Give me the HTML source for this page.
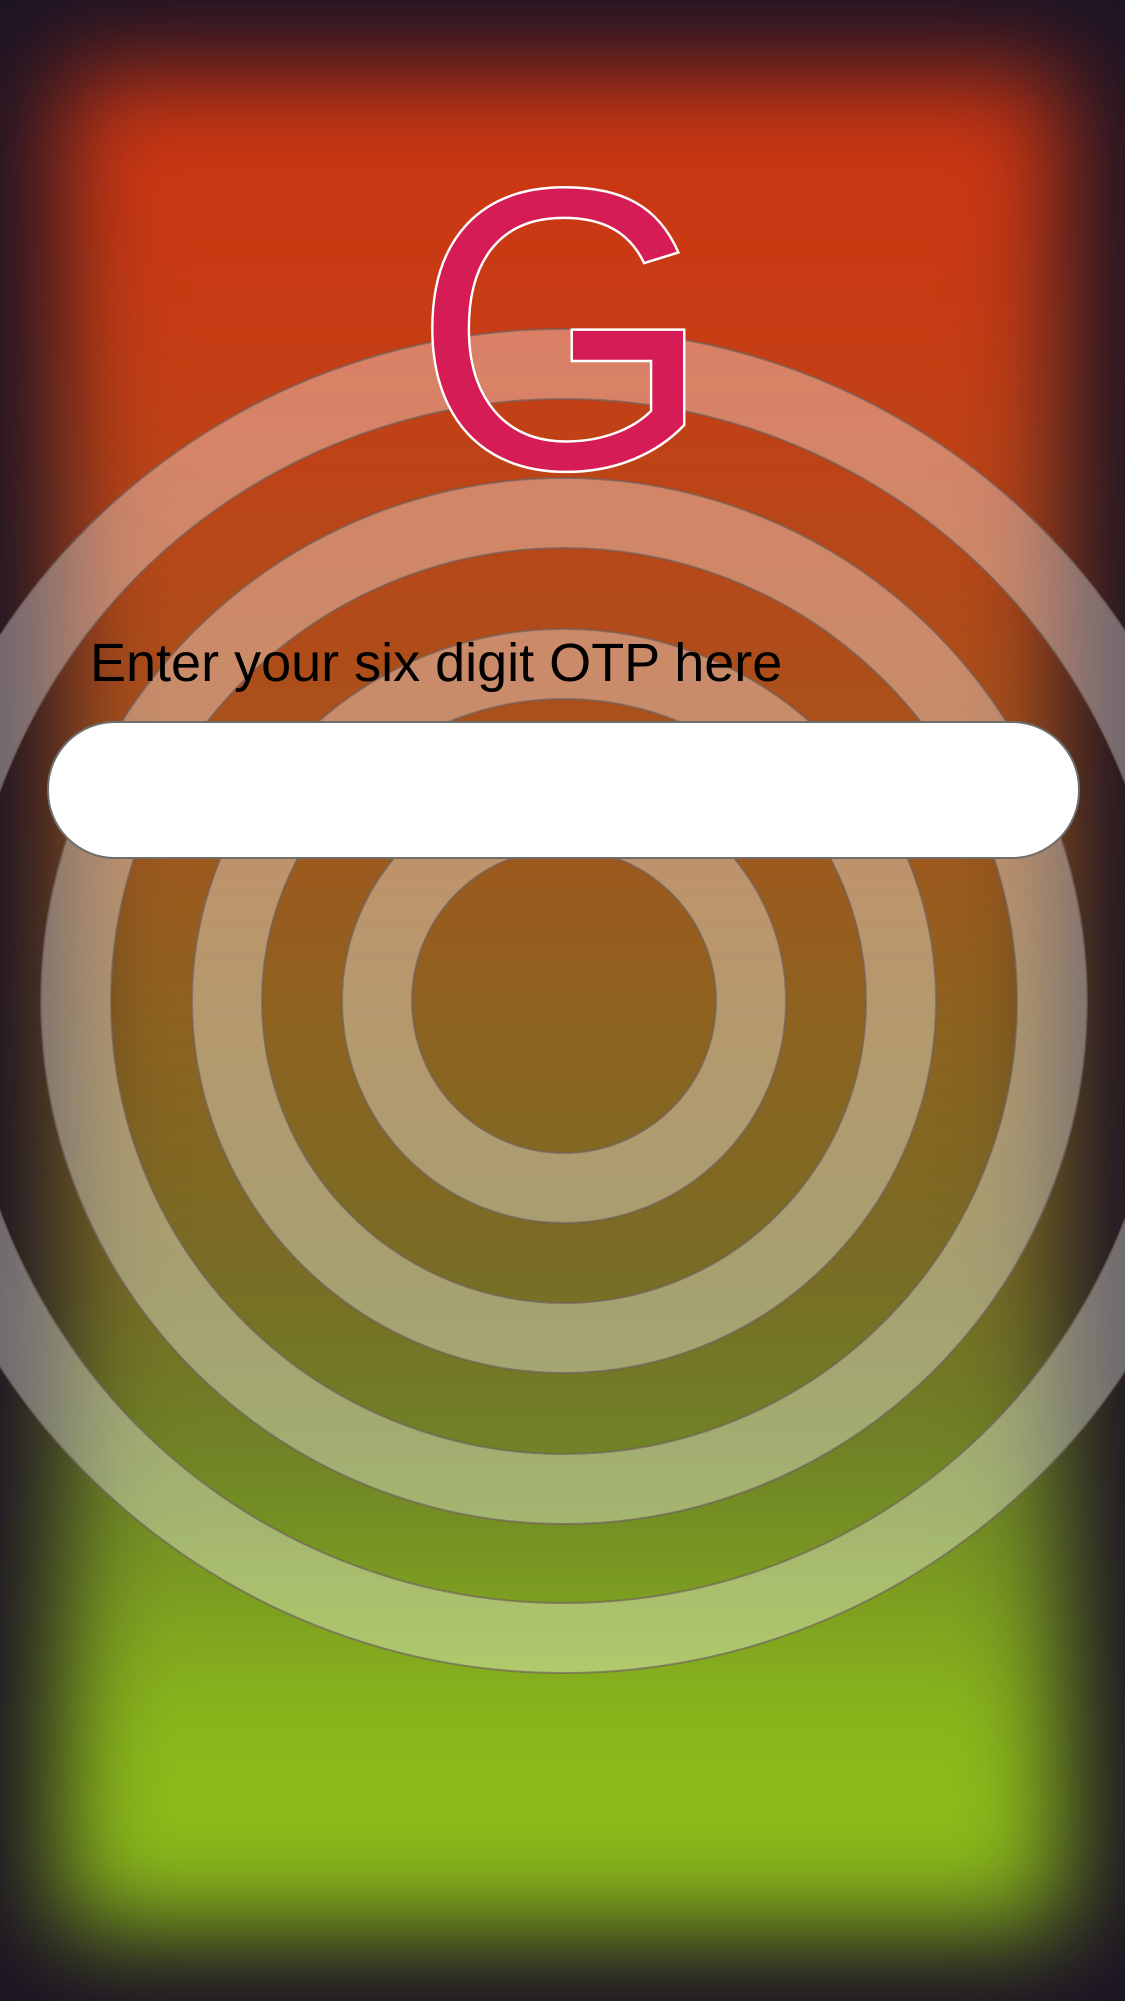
<!DOCTYPE html>
<html><head><meta charset="utf-8"><style>
html,body{margin:0;padding:0;width:1125px;height:2001px;overflow:hidden;background:#1c1424;position:relative;font-family:"Liberation Sans",sans-serif}
.bg{position:absolute;left:60px;top:70px;width:1005px;height:1860px;filter:blur(50px);
background:linear-gradient(to bottom,#cd3412 0%,#c63d14 15%,#a9501b 35%,#8f621f 50%,#776c25 65%,#6e8426 75%,#8cbb1a 90%,#8cbb1a 100%)}
svg{position:absolute;left:0;top:0}
.lbl{position:absolute;left:90px;top:632px;font-size:54px;color:#000;white-space:nowrap}
.inp{position:absolute;left:47px;top:721px;width:1029px;height:134px;background:#fff;border:2px solid #6e6e6e;border-radius:68px}
</style></head><body>
<div class="bg"></div>
<svg width="1125" height="2001">
<g fill="none" stroke-width="70" stroke="rgba(255,255,255,0.35)">
<circle cx="564" cy="1001" r="637"/>
<circle cx="564" cy="1001" r="488"/>
<circle cx="564" cy="1001" r="337"/>
<circle cx="564" cy="1001" r="187"/>
</g>
<g fill="none" stroke-width="2" stroke="rgba(110,95,90,0.65)">
<circle cx="564" cy="1001" r="672"/><circle cx="564" cy="1001" r="602"/>
<circle cx="564" cy="1001" r="523"/><circle cx="564" cy="1001" r="453"/>
<circle cx="564" cy="1001" r="372"/><circle cx="564" cy="1001" r="302"/>
<circle cx="564" cy="1001" r="222"/><circle cx="564" cy="1001" r="152"/>
</g>
<text x="563" y="468" text-anchor="middle" font-family="Liberation Sans" font-size="402" fill="#d61c55" stroke="#fff" stroke-width="2.5" transform="translate(563 0) scale(0.96 1) translate(-563 0)">G</text>
</svg>
<div class="lbl">Enter your six digit OTP here</div>
<div class="inp"></div>
</body></html>
